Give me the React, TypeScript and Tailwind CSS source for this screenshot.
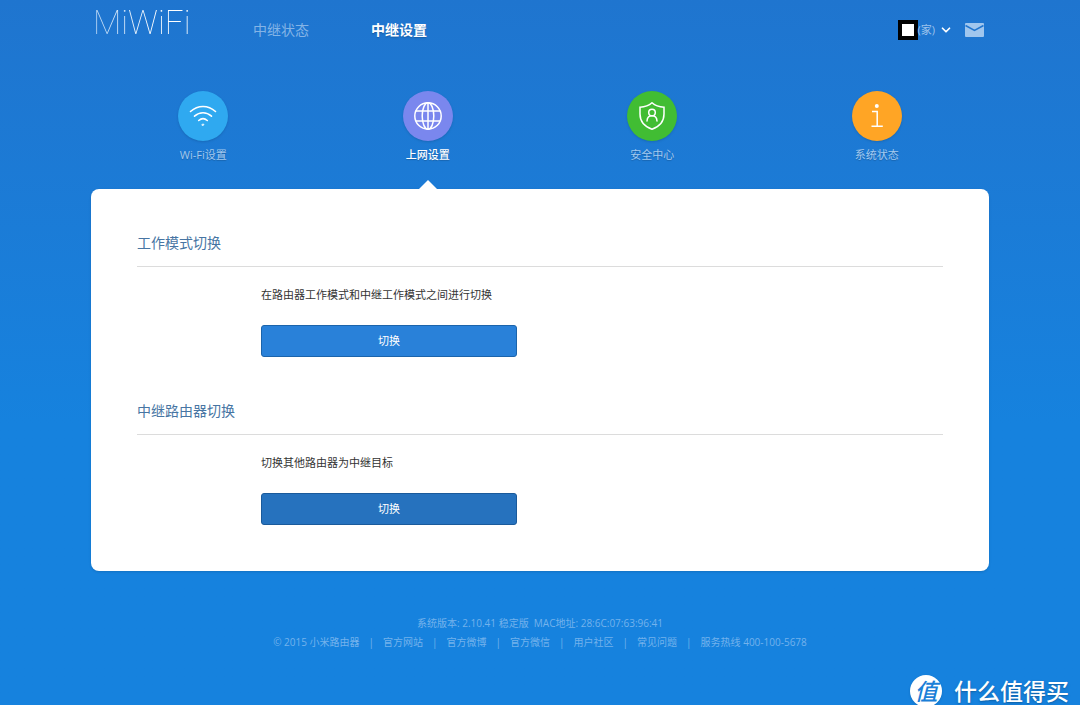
import type { ReactNode } from "react";
import { ChevronDown } from "lucide-react";

const navLinks = [
  { label: "中继状态", active: false },
  { label: "中继设置", active: true },
];

const footerLinks = ["官方网站", "官方微博", "官方微信", "用户社区", "常见问题"];

function WifiIcon() {
  return (
    <svg viewBox="0 0 28 28" className="size-7" fill="none" stroke="#fff" strokeWidth="1.6" strokeLinecap="round">
      <path d="M1.5 9.500C9 2.800 19 2.800 26.500 9.500" />
      <path d="M5.500 14.200c5.200-4.600 11.800-4.600 17 0" />
      <path d="M9.700 18.500c2.700-2.300 5.900-2.300 8.600 0" />
      <path d="M13 22.500c.7-.5 1.300-.5 2 0l-1 1.100z" fill="#fff" strokeWidth="0.8" />
    </svg>
  );
}

function GlobeIcon() {
  return (
    <svg viewBox="0 0 28 28" className="size-7" fill="none" stroke="#fff" strokeWidth="1.5">
      <circle cx="14" cy="14" r="13.200" />
      <ellipse cx="14" cy="14" rx="5.800" ry="13.200" />
      <path d="M14 .8v26.400M1.700 9h24.600M1.700 19h24.600" />
    </svg>
  );
}

function ShieldIcon() {
  return (
    <svg viewBox="0 0 28 28" className="size-7" fill="none" stroke="#fff" strokeWidth="1.5" strokeLinecap="round">
      <path d="M14 .8C11 3.500 6.500 5 2 5.200V12c0 7 4.500 12.500 12 15.200C21.500 24.500 26 19 26 12V5.200C21.500 5 17 3.500 14 .8z" />
      <circle cx="14" cy="10.500" r="3.300" />
      <path d="M9 19c.2-3.300 2-5.200 5-5.200s4.800 1.900 5 5.200" />
    </svg>
  );
}

function InfoIcon() {
  return (
    <svg viewBox="0 0 28 28" className="size-7" fill="none" stroke="#fff" strokeWidth="1.5">
      <circle cx="13.800" cy="4" r="2" fill="#fff" stroke="none" />
      <path d="M9 9.500h5.200V24M8.500 24.300h11.300" />
    </svg>
  );
}

function MailIcon() {
  return (
    <svg viewBox="0 0 19 14" className="w-[19px] h-[14px]">
      <rect width="19" height="14" rx="1" fill="#a0c6ee" />
      <path d="M.5 2.500l9 5 9-5" fill="none" stroke="#1f75cf" strokeWidth="1.500" />
    </svg>
  );
}

const tabs = [
  { label: "Wi-Fi设置", color: "bg-[#2fa9f0]", icon: <WifiIcon />, active: false },
  { label: "上网设置", color: "bg-[#7a87ee]", icon: <GlobeIcon />, active: true },
  { label: "安全中心", color: "bg-[#41bd33]", icon: <ShieldIcon />, active: false },
  { label: "系统状态", color: "bg-[#ffa525]", icon: <InfoIcon />, active: false },
];

function Header() {
  return (
    <header className="flex h-[60px] items-center pl-0.5 pr-[5px]">
      <a href="#" className="w-40 pb-[14px]">
        <span className="bg-linear-to-r from-[#b5d5f4] to-white to-60% bg-clip-text font-['Roboto'] text-[33px] font-thin leading-10 text-transparent">
          MiWiFi
        </span>
      </a>
      <nav className="flex gap-[62px] text-sm">
        {navLinks.map((link) => (
          <a
            key={link.label}
            href="#"
            className={link.active ? "font-bold text-white text-shadow-sm" : "text-[#84b4e6]"}
          >
            {link.label}
          </a>
        ))}
      </nav>
      <div className="ml-auto flex items-center">
        <button type="button" className="flex items-center text-[11px] text-[#9cc3ec]">
          <span className="size-5 border-4 border-black bg-white" />
          (家)
          <ChevronDown className="ml-1 size-[14px] text-white" strokeWidth={3} />
        </button>
        <a href="#" aria-label="消息" className="ml-3">
          <MailIcon />
        </a>
      </div>
    </header>
  );
}

function Tabs() {
  return (
    <nav className="grid grid-cols-4 pt-[31px]">
      {tabs.map((tab) => (
        <a key={tab.label} href="#" className="relative flex h-[98px] flex-col items-center">
          <span className={`flex size-[50px] items-center justify-center rounded-full shadow-sm ${tab.color}`}>
            {tab.icon}
          </span>
          <span
            className={`mt-[6px] text-[11px] leading-4 text-shadow-xs ${
              tab.active ? "font-medium text-white" : "text-[#a3c9ef]"
            }`}
          >
            {tab.label}
          </span>
          {tab.active && (
            <svg viewBox="0 0 18 9" className="absolute bottom-0 h-[9px] w-[18px]">
              <path d="M0 9L9 0l9 9z" fill="#fff" />
            </svg>
          )}
        </a>
      ))}
    </nav>
  );
}

function Section({ title, text, children }: { title: string; text: string; children: ReactNode }) {
  return (
    <section className="pb-11">
      <h2 className="border-b border-[#dcdcdc] pb-[13px] text-sm leading-5 text-[#4775a3]">{title}</h2>
      <div className="flex flex-col items-start gap-[22px] pl-[124px] pt-5">
        <p className="text-[11px] leading-4 text-[#333]">{text}</p>
        {children}
      </div>
    </section>
  );
}

function Footer() {
  return (
    <footer className="flex flex-col items-center pb-[53px] pt-[43px] text-[10px] leading-[19px] text-[#74b2ec]">
      <p className="whitespace-pre">系统版本: 2.10.41 稳定版  MAC地址: 28:6C:07:63:96:41</p>
      <div className="flex gap-[9px]">
        <span>© 2015 小米路由器</span>
        {footerLinks.map((label) => (
          <span key={label} className="flex gap-[9px]">
            <span>|</span>
            <a href="#">{label}</a>
          </span>
        ))}
        <span>|</span>
        <span>服务热线 400-100-5678</span>
      </div>
    </footer>
  );
}

function Watermark() {
  return (
    <div className="absolute -bottom-[2px] right-[11px] flex items-center gap-3 text-white">
      <span className="flex size-8 items-center justify-center rounded-full bg-white text-[23px] font-medium italic leading-8 text-[#1a7fd8] shadow-sm">
        值
      </span>
      <span className="text-[23px] font-medium leading-8 text-shadow-md">什么值得买</span>
    </div>
  );
}

export default function App() {
  return (
    <div className="relative bg-linear-to-b from-[#1f75cf] to-[#1682de] to-60% font-['Open_Sans','Noto_Sans_CJK_SC',sans-serif]">
      <div className="mx-auto max-w-[898px]">
        <Header />
        <Tabs />
        <main className="rounded-lg bg-white px-[46px] pb-0.5 pt-11 shadow-sm">
          <Section title="工作模式切换" text="在路由器工作模式和中继工作模式之间进行切换">
            <button
              type="button"
              className="h-8 w-64 rounded-[3px] border border-[#1b64ab] bg-[#2981d9] text-[11px] text-white"
            >
              切换
            </button>
          </Section>
          <Section title="中继路由器切换" text="切换其他路由器为中继目标">
            <button
              type="button"
              className="h-8 w-64 rounded-[3px] border border-[#1a5a9b] bg-[#2672be] text-[11px] text-white"
            >
              切换
            </button>
          </Section>
        </main>
        <Footer />
      </div>
      <Watermark />
    </div>
  );
}
